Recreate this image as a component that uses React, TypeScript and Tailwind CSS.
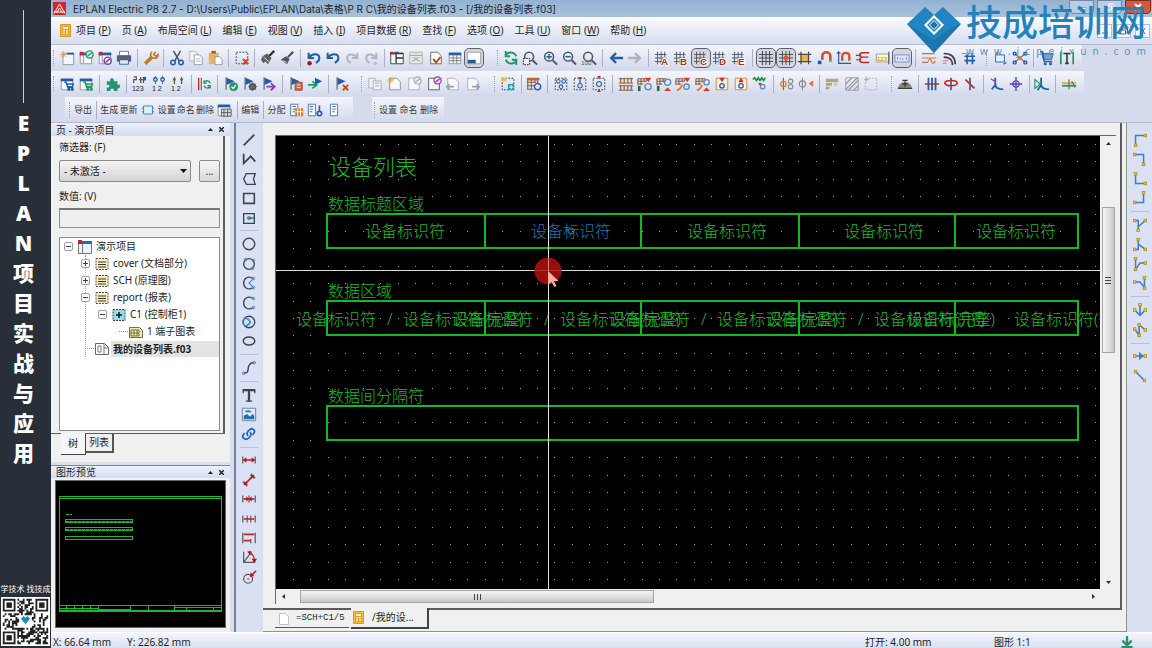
import { useState } from "react";
import type { ReactNode } from "react";

const line = (d: string, color = "#3f444c", width = 1.5) => (
  <path d={d} stroke={color} strokeWidth={width} fill="none" />
);
const shape = (d: string, color: string, stroke = "none") => <path d={d} fill={color} stroke={stroke} />;
const ring = (x: number, y: number, r: number, color = "#3f444c", width = 1.5, fill = "none") => (
  <circle cx={x} cy={y} r={r} stroke={color} strokeWidth={width} fill={fill} />
);

const BLUE = "#1f5fa8";
const RED = "#c8281e";
const GREEN = "#1e9a66";
const ORANGE = "#e07a2a";
const GREY = "#a9adb5";

const page = (color = "#8a8f98") => shape("M3 2.5h8l4 4v9H3z", "#f7f8fb", color);
const docGrid = (head: string) => (
  <>
    {shape("M2.5 3.5h13v12h-13z", "#f6f8fc", "#8a8f98")}
    {shape("M2 3h14v3H2z", head)}
  </>
);
const flag = (
  <>
    {line("M3.500 1.500v14", "#6b7280")}
    {shape("M4 2l9 4-9 4z", BLUE)}
  </>
);
const mesh = line("M1 5h13M1 9h13M1 13h13M4 2v14M8 2v14M12 2v14", "#4b4f57", 1);
const letterMesh = (letter: string) => (
  <>
    {mesh}
    <text x="8" y="17" fontSize="11" fontWeight="bold" fontFamily="Liberation Sans, sans-serif" fill="#a8320a" stroke="#fff" strokeWidth="2" paintOrder="stroke">
      {letter}
    </text>
  </>
);
const lens = (
  <>
    {ring(8, 7.5, 5, "#4b5563", 1.7)}
    {line("M12 11.500l5 5", "#4b5563", 2.2)}
  </>
);
const digits = (text: string) => (
  <text x="1" y="17" fontSize="8" fontFamily="Liberation Sans, sans-serif" fill="#222">
    {text}
  </text>
);
const dashedBox = (color = "#333") => (
  <rect x="2.500" y="2.500" width="13" height="13" fill="none" stroke={color} strokeDasharray="2 1.5" />
);
const orangeMesh = line("M1 3h10M1 6h10M1 9h6M1 3v7M4.500 3v7M8 3v4M11 3v3", "#8a5a3c", 1.2);
const dims = (y: number) => line(`M2 ${y - 4}v8M16 ${y - 4}v8`, "#555", 1.3);

const undo = (color: string) => line("M3 3v6h6M3.500 8.500c3-5 11-5 11.500 0 .2 3-2 5-4 6", color, 2.3);
const redo = (color: string) => line("M15 3v6H9M14.500 8.500C11 4 4 4 3.500 8.500c0 3 2 5 4 6", color, 2.3);

const knot = (x: number, y: number) => (
  <rect x={x - 1.5} y={y - 1.5} width="3" height="3" fill="#f2c230" stroke="#b8860b" strokeWidth=".8" />
);

const icons: Record<string, ReactNode> = {
  "new page": <>{shape("M4.500 4.500h12v12h-12z", "#f3f6fb", "#8a8f98")}{line("M9 4h8", BLUE, 2)}{line("M5 1v8M1 5h8M2 2l6 6M8 2L2 8", "#e9a33b", 1)}</>,
  "open project": <>{docGrid(BLUE)}{shape("M2 2h4v4H2z", RED)}{line("M6 6v9", "#8a8f98", 1)}{ring(13, 5, 4, GREEN, 1.6, "#dff3ea")}{line("M10.500 7l5-4", GREEN)}</>,
  "close project": <>{docGrid(BLUE)}{shape("M2 2h4v4H2z", RED)}{line("M6 6v9", "#8a8f98", 1)}{ring(12, 12, 4, "#7a3fa0", 1.6, "#f0e6f7")}{line("M9.500 14l5-4", "#7a3fa0")}</>,
  print: <>{shape("M4 1.500h10v5H4z", "#fff", "#6b7280")}{shape("M1 6h16v7H1z", "#566173")}{shape("M4 11h10v5H4z", "#dbeafe", BLUE)}</>,
  settings: <>{line("M2.500 15.500L10 8", "#c07a24", 4)}{line("M10 2c-3 3-1 7 2 7 3 1 5-1 5-4l-3 2-2-2 2-3", "#c07a24", 1.8)}</>,
  cut: <>{line("M5 1l7 12M13 1L6 13", "#4b5563", 1.7)}{ring(4.5, 14, 2.5, BLUE, 1.7)}{ring(13.5, 14, 2.5, BLUE, 1.7)}</>,
  copy: <>{shape("M2 1.500h6l3 3v8H2z", "#f5f6f8", GREY)}{shape("M7 5.500h6l3 3v8H7z", "#fff", "#8a93a2")}{line("M9 10h5M9 12.500h5", GREY, 1)}</>,
  paste: <>{shape("M2 3h11v13H2z", "#e6b45a")}{shape("M5 1h5v3H5z", "#8a6a30")}{shape("M9 7.500h5l3 3v6H9z", "#fff", "#8a93a2")}</>,
  "delete area": <>{dashedBox()}{line("M10 10l6 6M16 10l-6 6", "#d8431a", 2.2)}</>,
  "copy format": <>{line("M16 1l-6 6", "#333", 2.6)}{shape("M3 7l5-3 5 5-4 7-3-3-2 2-3-4z", "#59605c")}{line("M4 8l7 6", "#d9ded9", 1)}</>,
  "assign format": <>{line("M16 2l-6 6", "#444", 2.2)}{shape("M2 11l6-4 4 3-3 6z", "#4f5653")}{line("M4 12l5 2", "#ddd", 1)}</>,
  "undo list": <>{undo(BLUE)}<circle cx="4" cy="15" r="2.500" fill="#b11" /></>,
  undo: undo(BLUE),
  redo: redo("#b4b8bf"),
  "redo list": <>{redo("#b4b8bf")}<circle cx="14" cy="15" r="1.800" fill="#b4b8bf" /></>,
  workspace: <>{shape("M2 3.500h14v12H2z", "#fafafa", "#333")}{line("M2 4h14M8 4v11M8 9h8", "#333", 1.5)}{shape("M1 2h4v3H1z", RED)}{shape("M6 2h5v2H6z", BLUE)}</>,
  "page macro": <>{shape("M2 2.500h14v13H2z", "#eceae0", "#aaa")}{line("M2 6h14M5 9h8M5 13l4-3 4 3", GREY, 1.3)}</>,
  "check page": <>{page("#666")}{line("M6 10l3 4 5-6", "#c2410c", 2)}</>,
  "data table": <>{docGrid(BLUE)}{line("M3 9h12M3 12h12M7 6v9M11 6v9", "#777", 1)}</>,
  preview: <>{shape("M1.500 2.500h15v13h-15z", "#fff", "#999")}{shape("M2 11h9v4H2z", BLUE)}</>,
  refresh: <>{line("M15 7C12 1 5 2 3 6M3 1v6h5M3 11c3 6 10 5 12 1M15 17v-6h-5", GREEN, 2.1)}</>,
  "zoom window": <>{lens}<rect x="1.500" y="9.500" width="7" height="7" fill="#eee" stroke="#222" strokeDasharray="2 1" /></>,
  "zoom in": <>{lens}{line("M5 7.500h6M8 4.500v6", BLUE, 1.6)}</>,
  "zoom out": <>{lens}{line("M5 7.500h6", BLUE, 1.6)}</>,
  "zoom all": <>{lens}<text x="0" y="17" fontSize="7" fontFamily="Liberation Sans, sans-serif" fill="#176b45">100</text></>,
  back: line("M17 9H4M9 3.500L3.500 9 9 14.500", BLUE, 2.6),
  forward: line("M1 9h13M9 3.500l5.500 5.500L9 14.500", "#b0b3b8", 2.6),
  "grid A": letterMesh("A"),
  "grid B": letterMesh("B"),
  "grid C": letterMesh("C"),
  "grid D": letterMesh("D"),
  "grid E": letterMesh("E"),
  grid: line("M1 5h16M1 9h16M1 13h16M5 1v16M9 1v16M13 1v16", "#4b4f57", 1.2),
  "grid snap": <>{line("M1 5h16M1 9h16M1 13h16M5 1v16M9 1v16M13 1v16", "#4b4f57", 1.1)}{line("M9 6v6M6 9h6M7 7l4 4M11 7l-4 4", "#e0561c", 1.3)}</>,
  "align to grid": <>{shape("M4.500 5h8v8h-8z", "#e9b44a")}{line("M4.500 2v14M13 2v14M1 5h15M1 13h15", "#4a4a3c", 1.4)}</>,
  "object snap": <>{line("M6 11V7c0-6 9-6 9 0v6", "#d4521f", 3)}{shape("M1 12h4v4H1z", BLUE)}{line("M13.500 12.500h3", "#999", 2.5)}</>,
  "design mode": <>{line("M3 2v13h14M1 4l2-2 2 2", BLUE, 1.3)}{line("M7 12V7c0-5 8-5 8 0v5", "#d4521f", 2.6)}</>,
  "smart connect": <>{line("M16 3H9C4 3 4 8 9 8h6M16 14H9c-5 0-5-6 0-6", RED, 1.6)}{line("M1 6h6M1 11h6", "#44597a", 1.3)}</>,
  numbering: <>{shape("M1.500 4.500h14v9h-14z", "#fff6cc", "#999")}<text x="2" y="12" fontSize="7" fontFamily="Liberation Sans, sans-serif" fill="#c08a00">123</text>{line("M15.500 2v14", "#666")}</>,
  "coordinate input": <>{shape("M1 5.500h16v8H1z", "#dfe3fa", "#7a86d8")}{line("M4 8v3M7 9v2M10 9v2M14 8v3", "#7a86d8", 1)}</>,
  "signal path": <>{line("M1 4h14M1 14h7", "#8f7d78")}{line("M1 9h16M8 13c2-4 3-3 4 0s3 2 4-1", "#e2743a", 1.4)}</>,
  "signal arc": <>{line("M3 8c7 0 10 3 10 9M3 4c9 0 13 4 13 12", "#383c44", 1.8)}{line("M2 12h6M2 15h4", "#c76", 1.2)}</>,
  "signal net": <>{line("M2 4h14", "#b66", 1)}{line("M5 7h12M5 12h12M8 5v11M14 5v11", BLUE, 1.8)}</>,
  "place block": <>{shape("M4 5.500h10v8H4z", "#e6f2fb", BLUE)}{line("M7 3l-3 2M13 16l3-2", BLUE)}</>,
  "move nodes": <>{line("M3 4l12 10M15 4L3 14", "#55708f", 1.3)}{ring(3, 4, 1.7, BLUE)}{ring(15, 4, 1.7, BLUE)}{ring(3, 14, 1.7, BLUE)}{ring(15, 14, 1.7, BLUE)}{shape("M7 7h4v4H7z", ORANGE)}</>,
  cart: <>{shape("M3 4h13l-2 7H5z", "#6fa3d6", BLUE)}{line("M1 2h3l2 11h9", BLUE)}{ring(7, 15.5, 1, BLUE)}{ring(13, 15.5, 1, BLUE)}</>,
  "text frame": <>{line("M2 2v14M16 2v14", "#2a8a4a", 1.8)}{line("M5 4h8M9 4v11M7 15h4", "#2c3a30", 1.8)}</>,

  "parts list": <>{docGrid(BLUE)}{line("M6 7h2l2 6h6M8 9h8l-1 3H9", BLUE, 1.6)}{ring(11, 15, 1, BLUE)}{ring(15, 15, 1, BLUE)}</>,
  "parts cart": <>{docGrid(BLUE)}{line("M6 7h2l2 6h6M8 9h8l-1 3H9", GREEN, 1.8)}{ring(11, 15, 1, GREEN)}{ring(15, 15, 1, GREEN)}</>,
  "add-ons": shape("M2 6h4c-2-4 5-5 4 0h4v4c4-2 4 5 0 4v3h-4c1-4-5-4-4 0H2v-4c4 1 4-4 0-3z", "#2a9270"),
  "number all": <>{line("M3 1h3v3H3v4M9 4h4M11 1v7M14 1v7", "#555", 1.4)}{shape("M14 1h3v4h-3z", BLUE)}{digits("123")}</>,
  "number devices": <>{ring(5, 4, 2, BLUE)}{ring(13, 4, 2, BLUE)}{line("M5 6v3M13 6v3M5 0v2M13 0v2", BLUE, 1)}{digits("1  2")}</>,
  "number pins": <>{line("M5 1v8M13 1v8", "#555", 1.4)}{shape("M3 3h4L5 7zM11 3h4l-2 4z", "#5a6a20")}{digits("1  2")}</>,
  synchronize: <>{line("M3 2v14", RED, 1.5)}{line("M6 2v14", "#777", 1.5)}{line("M16 8c-2-4-6-3-7 0M9 5v3h3M9 11c2 4 6 3 7 0M16 14v-3h-3", GREEN, 1.5)}</>,
  "confirm mark": <>{flag}{ring(12, 12, 4.500, GREEN, 1, GREEN)}{line("M9.500 12l2 2 3-4", "#fff")}</>,
  "configure mark": <>{flag}{ring(12, 12, 3, "#555", 2.2)}{line("M12 7v10M7 12h10M8.500 8.500l7 7M15.500 8.500l-7 7", "#555", 1)}</>,
  "next mark": <>{flag}{line("M6 12h9M11 8l4.500 4-4.500 4", "#8e3fae", 2)}</>,
  "mark report": <>{flag}{shape("M8 7h8v9H8z", "#c96a50", "#a1442c")}{line("M10 10h4M10 13h4", "#fff", 1)}</>,
  "go to mark": <>{shape("M9 2l8 4-8 4z", BLUE)}{line("M1 10h9M6 6l5 4-5 4", GREEN, 1.8)}</>,
  "remove mark": <>{flag}{line("M10 10l6 6M16 10l-6 6", "#d8431a", 2.2)}</>,
  "copy page": <>{shape("M2 2.500h7v11H2z", "#eef0f4", GREY)}{shape("M7 5.500h9v10H7z", "#eef0f4", GREY)}{line("M9 8h5M9 11h5", GREY, 1)}</>,
  "new document": <>{page()}{line("M4 1v7M0 4.500h8M1.500 2l5 5M6.500 2l-5 5", "#e9a33b", 1)}</>,
  "link document": <>{page(GREY)}{ring(13, 5, 4, GREY, 1.4, "#eee")}{line("M10.500 7l5-4", GREY)}</>,
  "open document": <>{page("#555")}{ring(13, 5, 4, "#8e3fae", 1.4, "#f0e0f7")}{line("M10.500 7l5-4", "#8e3fae")}</>,
  "previous document": <>{page(GREY)}{line("M10 12H2M5 9l-3 3 3 3", "#9ca0a8", 1.8)}</>,
  "next document": <>{page(GREY)}{line("M8 12h8M13 9l3 3-3 3", "#9ca0a8", 1.8)}</>,
  "insert device": <>{dashedBox()}{shape("M1 2h6v4H1z", "#f0c040")}{shape("M9 9h7v7H9z", "#1fa0a8")}{line("M12.500 10v5M10 12.500h5", "#fff", 1)}</>,
  "terminal strip": <>{line("M1 3h14M1 7h10M1 11h8M1 15h7M2 3v12M6 3v12M10 3v5", "#8a5a3c", 1.2)}{shape("M1 2h14v3H1z", "#c0673a")}{ring(13, 12, 3.500, BLUE)}{line("M13 5v4", RED)}</>,
  "insert symbols": <>{dashedBox()}{ring(6, 6, 2, BLUE, 1.2)}{ring(12, 6, 2, BLUE, 1.2)}{ring(9, 12, 2, BLUE, 1.2)}</>,
  "insert symbol": <>{dashedBox()}{ring(9, 11, 2.500, BLUE, 1.2)}{line("M9 4v4", BLUE)}{shape("M7 1h4L9 5z", RED)}</>,
  "insert pin": <>{dashedBox()}{ring(9, 9, 2.800, BLUE, 1.2)}{shape("M7 0h4l-2 4zM7 18h4l-2-4z", RED)}</>,
  "plug strip": <>{line("M1 3h16M1 8h16M1 11h16M1 16h16", "#555", 1)}{line("M3 2v6M7 2v6M11 2v6M15 2v6M3 10v6M7 10v6M11 10v6M15 10v6", "#c0682c", 1.6)}</>,
  "plug in": <>{orangeMesh}{shape("M1 11h3v6H1z", "#2d6b45")}{shape("M9 2h7l-3 5z", "#d2431c")}{ring(12.5, 12, 3.500, "#5b8cc4")}</>,
  "plug out": <>{orangeMesh}{shape("M1 11h3v6H1z", "#2d6b45")}{shape("M9 17h8l-4-4z", "#d2431c")}{ring(13, 7, 3.500, "#5b8cc4")}</>,
  "plug swap": <>{orangeMesh}{line("M2 16c4-1 5-3 6-6", ORANGE, 2)}{shape("M10 2h7l-3 5z", "#d2431c")}{ring(13, 12, 3, "#5b8cc4")}</>,
  "plug turn": <>{orangeMesh}{line("M2 16c4-1 5-3 6-6", ORANGE, 2)}{shape("M9 17h8l-4-4z", "#d2431c")}{ring(13, 7, 3, "#5b8cc4")}</>,
  "box top": <>{shape("M2.500 2.500h13v13h-13z", "#fff3e8", ORANGE)}{ring(9, 11, 2.500, BLUE)}{shape("M6 2h6L9 7z", RED)}</>,
  "box middle": <>{shape("M2.500 2.500h13v13h-13z", "#fff3e8", ORANGE)}{ring(9, 11, 2.500, BLUE)}{shape("M6 7h6L9 2z", RED)}</>,
  "wire list": <>{line("M1 4l2-2 2 3 2-3 2 3 2-3 2 3 2-3", "#1b9040", 1.800)}{ring(12, 12, 2.500, "#5b8cc4")}{shape("M7 8h4l-2 3z", RED)}</>,
  "contact row": <>{line("M5 2v14", "#666", 1.2)}{ring(5, 9, 3, ORANGE)}{ring(13, 6, 2.500, "#888", 1.2)}{ring(13, 12, 2.500, "#888", 1.2)}</>,
  "contact end": <>{line("M5 2v14", "#888", 1.2)}{ring(5, 9, 3.500, "#888", 1.3)}{shape("M17 5v7l-5-3.500z", ORANGE)}</>,
  "align blocks": <>{shape("M2 3h14v4H2zM2 8h7v3H2zM2 12h4v3H2z", "#a9aa80")}{shape("M11 8h4v3h-4z", "#c8c8b4")}</>,
  hatch: <>{line("M2 9l7-7M2 15L15 2M5 16L16 5M11 16l5-5", "#93969c", 1.300)}{shape("M2 2h14v14H2z", "none", "#999")}</>,
  "empty frame": <>{dashedBox(GREY)}{line("M4 1v6M1 4h6", GREY, 1)}</>,
  "mounting rail": <>{shape("M1 14c1-5 4-7 8-7s7 2 8 7z", "#8a8878")}{line("M1 14h16M9 6v6M6 9h6M6 5h6", "#3f3f3a", 1.5)}</>,
  bus: <>{line("M5 2v14M9 2v14M13 2v14", BLUE, 2)}{line("M1 9h16", RED, 1.6)}</>,
  "bus shield": <>{line("M9 2v14", BLUE, 1.800)}<ellipse cx="9" cy="8" rx="7" ry="3" fill="none" stroke={RED} strokeWidth="1.800" /></>,
  "bus break": <>{line("M9 2v14", BLUE, 1.800)}{line("M4 4l10 10", RED, 2)}</>,
  "node left": <>{line("M7 2v7c0 4 4 6 9 6M3 15l5-6", BLUE, 2)}{line("M2 3l6 4", "#8e3fae", 1.300)}</>,
  "node center": <>{line("M9 1v16M2 9h14", BLUE, 1.500)}{ring(9, 9, 3.500, "#8e3fae", 1.500)}</>,
  "node right": <>{line("M8 2v7c0 4 4 6 9 6M8 10l-4 6", BLUE, 2)}{line("M1 4l6 5-6 5z", GREEN, 1.300)}</>,
  "wire merge": <>{line("M1 8h16", "#e0b020", 2)}{line("M1 11h16", GREEN, 2)}{line("M9 4v11M12 6l4 7", "#6b6b40", 1.300)}</>,

  frame: <>{shape("M4 4.500h10v9H4z", "#dff0fa", "#2b7cc0")}{line("M2 7h2M2 11h2M14 7h2M14 11h2", "#2b7cc0", 1)}</>,
  "report table": <>{docGrid(BLUE)}{shape("M6 8h11v8H6z", "#ddd", "#555")}{line("M9 8v8M13 8v8M6 12h11", "#555", 1)}</>,
  "report orange": <>{shape("M3 2.500h8v13H3z", "#fff", "#4470a0")}{line("M5 5h4M5 8h4M5 11h3", BLUE, 1)}{shape("M8 7h9v9H8z", ORANGE)}{line("M11 7v9M14 7v9M8 11h9", "#fff", 1)}</>,
  "report node": <>{shape("M1.500 2.500h8v13h-8z", "#fff", "#4470a0")}{line("M3 5h4M3 8h4M3 11h3", BLUE, 1)}{line("M14 4v6", BLUE, 1.800)}{ring(14, 13, 2.500, "#2256c8", 1.800)}</>,
  report: <>{shape("M5 2.500h8v13H5z", "#fff", "#4470a0")}{line("M7 5h4M7 8h4M7 11h3", BLUE, 1)}</>,

  line: line("M3 15L15 3", "#3f444c", 2),
  polyline: line("M3 3v11l8-8 5 6", "#3f444c", 2),
  polygon: line("M6 3h10l-2 6 2 6H6L3 9z"),
  rectangle: line("M3 4h12v11H3z", "#3f444c", 1.8),
  "rectangle by centre": <>{line("M3 4h12v11H3z")}{line("M9 9h6", BLUE)}{ring(9, 9, 1.5, BLUE, 1.2)}</>,
  circle: ring(9, 9, 6.5),
  "circle by points": <>{ring(9, 9, 6)}{ring(5, 4, 1.5, "#3b8ad8", 1)}{ring(14, 5, 1.5, "#3b8ad8", 1)}{ring(13, 14, 1.5, "#3b8ad8", 1)}</>,
  "arc by centre": <>{line("M14 4C8 0 3 4 3 9s5 9 11 5")}{line("M14 4L9 9l5 5", "#3b8ad8", 1.2)}{ring(14, 4, 1.5, "#3b8ad8", 1)}{ring(14, 14, 1.5, "#3b8ad8", 1)}</>,
  "arc by points": <>{line("M14 4C8 0 3 4 3 9s5 9 11 5")}{ring(14, 4, 1.5, "#3b8ad8", 1)}{ring(14, 14, 1.5, "#3b8ad8", 1)}</>,
  sector: <>{ring(9, 9, 6.5)}{ring(6, 9, 4, "#3b8ad8", 1.2)}{line("M6 5l5 4-5 4", "#3b8ad8", 1.2)}</>,
  ellipse: <ellipse cx="9" cy="9" rx="6.500" ry="4.500" fill="none" stroke="#3f444c" strokeWidth="1.600" />,
  spline: <>{line("M3 15c7 0 4-6 6-9s3-3 6-3", "#3f444c", 1.6)}{ring(3, 15, 1.5, "#3b8ad8", 1)}{ring(15, 3, 1.5, "#3b8ad8", 1)}</>,
  text: <>{line("M2 3.500h14M9 4v12", "#3f444c", 2.6)}{line("M2.500 3v4M15.500 3v4M5.500 16h7", "#3f444c", 1.400)}</>,
  image: <>{shape("M1.500 2.500h15v14h-15z", "#dcebf7", "#6b7a8c")}{shape("M3 15v-4l4-2 3 3 3-3 2 2v4zM5 5h5l2 2H5z", "#1f6db5")}</>,
  hyperlink: <>{line("M8 11c-3-3 0-5 2-7s6 0 5 3l-2 3", "#1f6db5", 2)}{line("M10 7c3 3 0 5-2 7s-7 0-6-3l2-3", "#1f6db5", 2)}</>,
  "linear dimension": <>{dims(9)}{line("M3 9h12", RED, 1.8)}{shape("M2 9l4-3v6zM16 9l-4-3v6z", "#b3181c")}</>,
  "aligned dimension": <>{line("M2 11l5 5M11 2l5 5", "#555", 1.3)}{line("M4 14L14 4", RED, 2)}{shape("M3 15l1-5 4 4zM15 3l-1 5-4-4z", "#b3181c")}</>,
  "continued dimension": <>{dims(9)}{line("M9 5v8", "#555", 1.3)}{line("M3 9h12", RED, 2)}{shape("M9 9L6 6v6zM9 9l3-3v6z", "#b3181c")}</>,
  "chain dimension": <>{dims(9)}{line("M7 5v8M11 5v8", "#555", 1.2)}{line("M3 9h12", RED, 1.8)}</>,
  "baseline dimension": <>{line("M2 3v12M16 3v12M11 10v5", "#555", 1.3)}{line("M3 5h12M3 12h8", RED, 2)}</>,
  "angular dimension": <>{line("M3 3v12h13M3 15L12 3", "#555", 1.3)}{line("M9 4c4 1 6 5 6 9", RED, 1.5)}{shape("M7 3l4-1v5zM12 11h6l-3 5z", "#b3181c")}</>,
  "radius dimension": <>{ring(8, 11, 5, "#555", 1.3)}<circle cx="8" cy="11" r="1" fill={RED} />{line("M11 8l6-6", RED, 1.8)}{shape("M10 9l1-5 4 4z", "#b3181c")}</>,

  "corner down right": <>{line("M4 15V4h11", "#3b7fc4", 1.7)}{knot(4, 15)}{knot(15, 4)}</>,
  "corner down left": <>{line("M3 4h10v11", "#3b7fc4", 1.7)}{knot(3, 4)}{knot(13, 15)}</>,
  "corner up right": <>{line("M4 3v11h11", "#3b7fc4", 1.7)}{knot(4, 3)}{knot(15, 14)}</>,
  "corner up left": <>{line("M3 14h10V3", "#3b7fc4", 1.7)}{knot(3, 14)}{knot(13, 3)}</>,
  "t-node down": <>{line("M3 4h4v11M15 4L7 11", "#3b7fc4", 1.7)}{knot(3, 4)}{knot(15, 4)}{knot(7, 15)}</>,
  "t-node up": <>{line("M3 14h4V3M7 8l8 6", "#3b7fc4", 1.7)}{knot(3, 14)}{knot(15, 14)}{knot(7, 3)}</>,
  "t-node right": <>{line("M4 3v12l5-7h6", "#3b7fc4", 1.7)}{knot(4, 3)}{knot(4, 15)}{knot(15, 8)}</>,
  "t-node left": <>{line("M3 8h6l5 6V3", "#3b7fc4", 1.7)}{knot(3, 8)}{knot(14, 3)}{knot(14, 15)}</>,
  jumper: <>{line("M9 3v12M3 9l6 6 6-6", "#3b7fc4", 1.8)}{knot(9, 3)}{knot(3, 9)}{knot(15, 9)}</>,
  crossing: <>{line("M3 8l5 7V3l7 6", "#3b7fc4", 1.8)}{knot(3, 8)}{knot(15, 9)}{knot(8, 15)}{knot(8, 3)}</>,
  interruption: <>{line("M3 9h12", "#3b7fc4", 1.7)}{shape("M8 4l5 5-5 5z", "#3b7fc4")}{knot(3, 9)}{knot(15, 9)}</>,
  diagonal: <>{line("M4 4l10 10", "#3b7fc4", 1.8)}{knot(4, 4)}{knot(14, 14)}</>,
};

const pressed = new Set(["preview", "grid C", "grid", "grid snap", "coordinate input"]);

function Icon({ name }: { name: string }) {
  return (
    <svg className="h-4 w-4 shrink-0" viewBox="0 0 18 18" fill="none" aria-hidden="true">
      {icons[name]}
    </svg>
  );
}

function ToolButton({ name }: { name: string }) {
  // Entries prefixed with "#" show their caption instead of a glyph
  if (name.startsWith("#")) {
    return (
      <button type="button" className="w-[18px] shrink-0 whitespace-nowrap text-[9px] leading-4 text-[#33363c]">
        {name.slice(1)}
      </button>
    );
  }
  const base = "flex h-[18px] w-[18px] shrink-0 items-center justify-center rounded-sm";
  return (
    <button
      type="button"
      aria-label={name}
      className={pressed.has(name) ? `${base} bg-[#d3d6df] outline outline-[#5b5f68]` : `${base} hover:bg-white/60`}
    >
      <Icon name={name} />
    </button>
  );
}

function Toolbar({ items, width, label }: { items: string; width: string; label: string }) {
  return (
    <div role="toolbar" aria-label={label} className={`flex h-[25px] items-center bg-linear-to-b from-[#f4f6fc] to-[#d3d9ec] ${width}`}>
      <span className="mr-1 h-4 w-px shrink-0 border-l border-dotted border-[#9aa3ba]" />
      <div className="flex flex-1 items-center justify-between">
        {items.split(",").map((name, i) =>
          name === "|" ? (
            <span key={i} className="flex w-1.5 shrink-0 justify-center">
              <span className="h-[18px] w-px bg-[#aab1c4]" />
            </span>
          ) : (
            <ToolButton key={i} name={name} />
          ),
        )}
      </div>
    </div>
  );
}

function SideToolbar({ items, height, label }: { items: string; height: string; label: string }) {
  return (
    <div role="toolbar" aria-label={label} aria-orientation="vertical" className={`flex w-full flex-col items-center justify-between bg-[#dbe1f4] ${height}`}>
      {items.split(",").map((name, i) =>
        name === "|" ? (
          <span key={i} className="flex h-1.5 w-[18px] items-center">
            <span className="h-px w-full bg-[#b9c1d8]" />
          </span>
        ) : (
          <ToolButton key={i} name={name} />
        ),
      )}
    </div>
  );
}

const menus = ["项目 (P)", "页 (A)", "布局空间 (L)", "编辑 (E)", "视图 (V)", "插入 (I)", "项目数据 (R)", "查找 (F)", "选项 (O)", "工具 (U)", "窗口 (W)", "帮助 (H)"];

function MenuLabel({ text }: { text: string }) {
  const [name, key] = text.split(/[()]/);
  return (
    <>
      {name}(<span className="underline">{key}</span>)
    </>
  );
}

function FormIcon({ className }: { className: string }) {
  return (
    <svg className={className} viewBox="0 0 11 13" aria-hidden="true">
      <path d="M.5.500h10v12H.5z" fill="#f5b93a" stroke="#d99a22" />
      <path d="M2.500 2.500h6v8h-6zM2.500 5.500h6M2.500 8h6M5.500 5.500v5" fill="#fff2c8" stroke="#e0a02a" />
    </svg>
  );
}

function WindowControls() {
  const base = "flex h-[14px] items-center justify-center rounded-b-sm border";
  return (
    <div className="flex h-full items-start gap-[3px] pr-px">
      <button type="button" aria-label="最小化" className={`${base} w-[25px] border-[#6f87a5] bg-[#b9cde4]`}>
        <svg className="h-2 w-2.5" viewBox="0 0 10 8" aria-hidden="true"><path d="M1 4.500h8v2H1z" fill="#fff" stroke="#5b6b80" strokeWidth=".5" /></svg>
      </button>
      <button type="button" aria-label="还原" className={`${base} w-[25px] border-[#6f87a5] bg-[#b9cde4]`}>
        <svg className="h-2 w-2.5" viewBox="0 0 10 8" aria-hidden="true"><path d="M3.500 3V1h5v4H7M1.500 3h5v4h-5z" fill="none" stroke="#fff" /></svg>
      </button>
      <button type="button" aria-label="关闭" className={`${base} w-[26px] border-[#7d2f22] bg-[#d05a42]`}>
        <svg className="h-2 w-2.5" viewBox="0 0 10 8" aria-hidden="true"><path d="M2 1l6 6M8 1L2 7" stroke="#fff" strokeWidth="2" /></svg>
      </button>
    </div>
  );
}

function DocumentControls() {
  const base = "flex h-[14px] w-[15px] items-center justify-center border border-[#b4bccb] bg-white/60";
  return (
    <div className="ml-auto flex gap-1 pr-0.5">
      <button type="button" aria-label="最小化文档" className={base}>
        <svg className="h-2 w-2" viewBox="0 0 8 8" aria-hidden="true"><path d="M1 6h6" stroke="#667" /></svg>
      </button>
      <button type="button" aria-label="还原文档" className={base}>
        <svg className="h-2 w-2" viewBox="0 0 8 8" aria-hidden="true"><path d="M2.500 3V1h5v4H6M.5 3h5v4h-5z" fill="none" stroke="#667" /></svg>
      </button>
      <button type="button" aria-label="关闭文档" className={base}>
        <svg className="h-2 w-2" viewBox="0 0 8 8" aria-hidden="true"><path d="M2 1l4 6M6 1L2 7" stroke="#667" /></svg>
      </button>
    </div>
  );
}

function Watermark() {
  return (
    <div className="pointer-events-none absolute right-[6px] top-0 flex gap-1 text-[#2482bb]">
      <svg className="mt-[6px] h-[48px] w-[56px]" viewBox="0 0 56 48" aria-hidden="true">
        <path d="M1 18L19 1l9 8 9-8 18 17-27 29z" fill="#2185c2" />
        <path d="M1 18L28 47l27-29-10 4-17 12z" fill="#17699f" opacity=".5" />
        <path d="M28 9l10 10-10 10-10-10z" fill="#fff" />
        <path d="M28 12l7 7-7 7-7-7z" fill="#2185c2" />
        <path d="M28 14.500l4.500 4.500-4.500 4.500-4.500-4.500z" fill="#1b75ad" stroke="#fff" />
      </svg>
      <div className="flex flex-col">
        <span className="whitespace-nowrap text-[36px] font-medium leading-[45px]">技成培训网</span>
        <span className="flex justify-between text-[10px] leading-3 text-[#5f93bb]">
          {"www.jcpeixun.com".split("").map((char, i) => (
            <span key={i}>{char}</span>
          ))}
        </span>
      </div>
    </div>
  );
}

const QR_SIZE = 25;

function qrCells() {
  let seed = 91;
  let d = "";
  const inFinder = (x: number, y: number) => (x < 8 && y < 8) || (x > 16 && y < 8) || (x < 8 && y > 16);
  for (let y = 0; y < QR_SIZE; y++) {
    for (let x = 0; x < QR_SIZE; x++) {
      seed = (seed * 1103515245 + 12345) % 2147483648;
      const inLogo = x > 8 && x < 16 && y > 8 && y < 16;
      if (!inFinder(x, y) && !inLogo && seed > 1073741824) d += `M${x} ${y}h1v1h-1z`;
    }
  }
  return d;
}

function QrCode() {
  return (
    <svg className="w-full bg-white" viewBox="-1 -1 27 27" role="img" aria-label="二维码">
      <path d={qrCells()} fill="#222" />
      {[[0, 0], [18, 0], [0, 18]].map(([x, y]) => (
        <g key={`${x}-${y}`} fill="#222">
          <path d={`M${x + 0.5} ${y + 0.5}h6v6h-6z`} fill="none" stroke="#222" />
          <path d={`M${x + 2} ${y + 2}h3v3h-3z`} />
        </g>
      ))}
      <path d="M10 11l1.500-1.500 1 1 1-1L15 11l-2.500 3z" fill="#2185c2" />
    </svg>
  );
}

function CourseBanner() {
  return (
    <aside className="flex w-[51px] shrink-0 flex-col items-center bg-[#282f38] text-white">
      <span className="mt-[10px] h-[93px] w-px shrink-0 bg-[#f0e020] mr-1" />
      <h1 className="mr-1 mt-[5px] flex flex-col items-center text-[21px] font-black leading-[30px]">
        {"EPLAN项目实战与应用".split("").map((char, i) => (
          <span key={i}>{char}</span>
        ))}
      </h1>
      <p className="mt-auto whitespace-nowrap text-[8px] leading-4">学技术 找技成</p>
      <div className="mb-0.5 w-full px-px">
        <QrCode />
      </div>
    </aside>
  );
}

function PanelHeader({ title }: { title: string }) {
  return (
    <header className="flex h-[13px] items-center bg-linear-to-b from-[#eef1fa] to-[#d5dcf0] pl-[5px] pr-1.5 text-[10px] leading-3">
      <h2 className="flex-1">{title}</h2>
      <button type="button" aria-label="停靠" className="mr-1.5">
        <svg className="h-[3px] w-[5px]" viewBox="0 0 5 3" aria-hidden="true"><path d="M0 3l2.500-3L5 3z" fill="#222" /></svg>
      </button>
      <button type="button" aria-label="关闭">
        <svg className="h-[5px] w-[5px]" viewBox="0 0 5 5" aria-hidden="true"><path d="M0 0l5 5M5 0L0 5" stroke="#222" strokeWidth="1.400" /></svg>
      </button>
    </header>
  );
}

type TreeItem = { label: string; icon: "project" | "doc" | "cabinet" | "terminal" | "form"; open?: boolean; selected?: boolean; children?: TreeItem[] };

const tree: TreeItem = {
  label: "演示项目",
  icon: "project",
  open: true,
  children: [
    { label: "cover (文档部分)", icon: "doc", open: false },
    { label: "SCH (原理图)", icon: "doc", open: false },
    {
      label: "report (报表)",
      icon: "doc",
      open: true,
      children: [{ label: "C1 (控制柜1)", icon: "cabinet", open: true, children: [{ label: "1 端子图表", icon: "terminal" }] }],
    },
    { label: "我的设备列表.f03", icon: "form", selected: true },
  ],
};

const treeIcons = {
  project: <><path d="M.5 1.500h13v12H.5z" fill="#eef4fa" stroke="#777" /><path d="M0 1h14v3H0z" fill="#1f6db5" /><path d="M0 0h4v4H0z" fill="#c22" /><path d="M4.500 4v9" stroke="#777" /></>,
  doc: <><path d="M1 1.500h12v11H1z" fill="#fdeec0" stroke="#555" strokeDasharray="2 1" /><path d="M3 5h8M3 7.500h8M3 10h8" stroke="#333" /></>,
  cabinet: <><path d="M1 1.500h12v11H1z" fill="#8fe0e6" stroke="#444" strokeDasharray="2 1" /><path d="M7 4v6M4 7h6" stroke="#111" strokeWidth="1.500" /></>,
  terminal: <><path d="M.5 2.500h10l3 3v7H.5z" fill="#f3ecb4" stroke="#77703a" /><path d="M2 5h8v6H2zM2 8h8M5 5v6M8 5v6" fill="none" stroke="#77703a" /></>,
  form: <><path d="M.5 1.500h9l4 4v7H.5z" fill="#fff" stroke="#666" /><path d="M3 4v6M3 4h3v6H3M9 2v4h4M9 6v6" fill="none" stroke="#777" /></>,
};

function TreeNode({ item, root }: { item: TreeItem; root?: boolean }) {
  return (
    <li>
      <div className="flex h-[17px] items-center">
        {item.open === undefined ? (
          <span className="ml-1 w-[9px] border-t border-dotted border-[#999]" />
        ) : (
          <button type="button" aria-label={item.label} aria-expanded={item.open} className="flex h-[9px] w-[9px] shrink-0 items-center justify-center rounded-xs border border-[#9a9fa8] bg-white">
            <svg className="h-[5px] w-[5px]" viewBox="0 0 5 5" aria-hidden="true">
              <path d={item.open ? "M0 2.500h5" : "M0 2.500h5M2.500 0v5"} stroke="#345" />
            </svg>
          </button>
        )}
        <svg className={item.open === undefined ? "ml-px h-[14px] w-[14px] shrink-0" : "ml-[5px] h-[14px] w-[14px] shrink-0"} viewBox="0 0 14 14" fill="none" aria-hidden="true">
          {treeIcons[item.icon]}
        </svg>
        <span className={item.selected ? "ml-0.5 flex-1 whitespace-nowrap bg-[#e3e3e3] pl-0.5 font-bold leading-4" : "pl-1 whitespace-nowrap"}>{item.label}</span>
      </div>
      {item.children && (
        <ul className={root ? "ml-[21px] border-l border-dotted border-[#aaa] [&>li]:-ml-[5px]" : "ml-[17px]"}>
          {item.children.map((child) => (
            <TreeNode key={child.label} item={child} />
          ))}
        </ul>
      )}
    </li>
  );
}

function PagesPanel() {
  const [value, setValue] = useState("");
  return (
    <section className="flex flex-1 flex-col bg-[#f0f0f0] text-[10px]">
      <PanelHeader title="页 - 演示项目" />
      <div className="mr-[5px] flex flex-1 flex-col border-b border-r-2 border-[#5a5d63] pb-0.5 pl-2 pr-[3px]">
        <label htmlFor="filter" className="mt-0.5 leading-[18px]">筛选器: (F)</label>
        <div className="mt-1 flex h-[22px] justify-between gap-2">
          <div className="relative flex min-w-0 flex-1">
            <select id="filter" className="w-full appearance-none rounded-xs border border-[#8a8a8a] bg-linear-to-b from-[#f4f4f4] to-[#d4d4d4] pl-1 text-[10px]">
              <option>- 未激活 -</option>
            </select>
            <svg className="pointer-events-none absolute right-1 top-[9px] h-1 w-[7px]" viewBox="0 0 7 4" aria-hidden="true">
              <path d="M0 0h7L3.500 4z" fill="#111" />
            </svg>
          </div>
          <button type="button" aria-label="筛选器设置" className="w-[21px] rounded-xs border border-[#8a8a8a] bg-linear-to-b from-[#f6f6f6] to-[#d8d8d8]">...</button>
        </div>
        <label htmlFor="value" className="mt-1 leading-[20px]">数值: (V)</label>
        <input id="value" value={value} onChange={(e) => setValue(e.target.value)} className="mt-0.5 h-[20px] border border-t-2 border-[#8d8d8d] border-t-[#777] bg-[#efefef] px-1" />
        <ul className="mt-[9px] flex-1 border border-[#8a8d92] bg-white pl-1">
          <TreeNode item={tree} root />
        </ul>
      </div>
      <div role="tablist" className="flex h-[28px] pl-2.5">
        <button type="button" role="tab" aria-selected="true" className="-mt-px h-[22px] w-[25px] border-b border-r border-[#444] bg-[#f6f6f6]">树</button>
        <button type="button" role="tab" aria-selected="false" className="h-[19px] w-7 border-b-2 border-r-2 border-[#555]">列表</button>
      </div>
    </section>
  );
}

function PreviewPanel() {
  return (
    <section className="mt-[3px] flex h-[167px] shrink-0 flex-col border-t border-[#7a86a5] bg-[#f0f0f0]">
      <PanelHeader title="图形预览" />
      <div className="mb-1 ml-1 mr-1 mt-0.5 flex-1 border border-[#666] bg-black">
        <svg className="h-full w-full" viewBox="0 0 168 145" preserveAspectRatio="none" fill="none" stroke="#1db82d" shapeRendering="crispEdges" aria-hidden="true">
          <path d="M3.500 15.500h161v114h-161zM3.500 17.500h161" />
          <path d="M9.500 38.500h67v3h-67zM9.500 46.500h67v3h-67zM9.500 55.500h67v3h-67z" />
          <path d="M10 33.500h6M10 40h66M10 48h66" strokeDasharray="3 1" />
          <path d="M3.500 123.500h161M3.500 126.500h38M3.500 128.500h161M42 127.500h32M74 123v6M92 123v6M118 123v6M118 125.500h46M130 126v3M157 125v4M10 123v6M18 123v6M26 123v6M34 123v6M42 123v6" />
        </svg>
      </div>
    </section>
  );
}

function dotGrid() {
  let d = "";
  for (let row = 0; row < 50; row++) {
    for (let col = 0; col < 100; col++) {
      d += `M${Math.round(17 + col * 17.43)} ${Math.round(8 + row * 17.4)}h1v1h-1z`;
    }
  }
  return d;
}

const fieldStarts = [20, 177, 334, 491, 631];
const headerStarts = [89, 255, 411, 568, 700];

function FormEditor() {
  return (
    <svg className="min-h-0 min-w-0 flex-1 bg-black" role="img" aria-label="设备列表" fill="#22b82e" fontSize="16" fontWeight="300">
      <path d={dotGrid()} fill="#9a9e9a" />
      <text x="53" y="39" fontSize="22">设备列表</text>
      <text x="52" y="74">数据标题区域</text>
      <text x="52" y="161">数据区域</text>
      <text x="52" y="266">数据间分隔符</text>
      {headerStarts.map((x, i) => (
        <text key={x} x={x} y="101" fill={i === 1 ? "#1f78ac" : "#22b82e"}>设备标识符</text>
      ))}
      {fieldStarts.map((x, i) => (
        <text key={x} y="189">
          <tspan x={x}>设备标识符</tspan>
          {i < 4 && <tspan x={x + 91}>/</tspan>}
          <tspan x={x + 107}>设备标识符(完整)</tspan>
        </text>
      ))}
      <circle cx="295" cy="95" r="3" fill="none" stroke="#1b75b5" />
      <g fill="none" stroke="#14b824" strokeWidth="2">
        <path d="M51 78h751v34H51zM209 78v34M365 78v34M523 78v34M679 78v34" />
        <path d="M51 165h751v34H51zM209 165v34M365 165v34M523 165v34M679 165v34" />
        <path d="M51 270h751v34H51z" />
      </g>
      <line x1="0" x2="100%" y1="134.500" y2="134.500" stroke="#d8d8d8" />
      <line x1="272.500" x2="272.500" y1="0" y2="100%" stroke="#e4e4e4" />
      <circle cx="272" cy="135" r="13.500" fill="#b3100c" fillOpacity=".85" />
      <path d="M272 135v14l3.500-3 3 5 2-1-3-5h5z" fill="#ffb0a8" />
      <path d="M272.500 122v13" stroke="#e08080" />
    </svg>
  );
}

function ScrollArrow({ d, label, className }: { d: string; label: string; className: string }) {
  return (
    <button type="button" aria-label={label} className={`flex items-center justify-center ${className}`}>
      <svg className="h-[5px] w-[5px]" viewBox="0 0 5 5" aria-hidden="true">
        <path d={d} fill="#333" />
      </svg>
    </button>
  );
}

function Scrollbar({ vertical }: { vertical?: boolean }) {
  if (vertical) {
    return (
      <div className="flex w-4 shrink-0 flex-col items-center bg-[#f0f0f0]">
        <ScrollArrow label="向上滚动" d="M0 4l2.500-3L5 4z" className="h-[14px] w-full" />
        <span className="mt-[57px] flex h-[146px] w-[13px] flex-col items-center justify-center gap-0.5 border border-[#a5a5a5] bg-linear-to-r from-[#f5f5f5] to-[#c9c9c9]">
          <span className="h-px w-1.5 bg-[#444]" />
          <span className="h-px w-1.5 bg-[#444]" />
          <span className="h-px w-1.5 bg-[#444]" />
        </span>
        <ScrollArrow label="向下滚动" d="M0 1l2.500 3L5 1z" className="mt-auto h-[14px] w-full" />
      </div>
    );
  }
  return (
    <div className="flex h-[15px] shrink-0 items-center bg-[#f0f0f0] pr-4">
      <ScrollArrow label="向左滚动" d="M4 0L1 2.500 4 5z" className="h-full w-[14px]" />
      <span className="ml-2.5 flex h-[13px] w-[43%] items-center justify-center gap-0.5 border border-[#a5a5a5] bg-linear-to-b from-[#f5f5f5] to-[#c9c9c9]">
        <span className="h-1.5 w-px bg-[#444]" />
        <span className="h-1.5 w-px bg-[#444]" />
        <span className="h-1.5 w-px bg-[#444]" />
      </span>
      <ScrollArrow label="向右滚动" d="M1 0l3 2.500L1 5z" className="ml-auto h-full w-[14px]" />
    </div>
  );
}

function Workspace() {
  return (
    <main className="flex min-w-0 flex-1 flex-col border-b border-r border-[#8d9586] bg-[#f0f0f0]">
      <div className="flex min-h-0 flex-1 flex-col border-b-2 border-r-2 border-[#5b5b5b] pb-1 pl-3 pr-1 pt-3 mr-1">
        <div className="flex min-h-0 flex-1 flex-col border-l border-t border-[#666]">
          <div className="flex min-h-0 flex-1">
            <FormEditor />
            <Scrollbar vertical />
          </div>
          <Scrollbar />
        </div>
      </div>
      <div role="tablist" className="flex h-[21px] shrink-0 items-start gap-0.5 pl-3 text-[10px]">
        <button type="button" role="tab" aria-selected="false" className="flex h-[18px] w-[74px] items-center border-b border-[#555] pl-[3px] font-['Liberation_Mono','Noto_Sans_CJK_SC',monospace] text-[9px]">
          <svg className="mr-1.5 h-3 w-3 shrink-0" viewBox="0 0 12 12" aria-hidden="true">
            <path d="M1.500.5h6l3 3v8h-9z" fill="#fff" stroke="#bcc3d0" />
          </svg>
          =SCH+C1/5
        </button>
        <button type="button" role="tab" aria-selected="true" className="-mt-0.5 flex h-[21px] w-[78px] items-center border-b-2 border-r-2 border-[#444] bg-[#f0f0f0] pl-0.5">
          <FormIcon className="mr-2 h-[13px] w-[11px]" />
          /我的设...
        </button>
      </div>
    </main>
  );
}

export default function App() {
  return (
    <div className="relative flex h-screen overflow-hidden bg-[#d8dff0] font-['Noto_Sans','Noto_Sans_CJK_SC',sans-serif] text-[#1d1f24]">
      <CourseBanner />
      <div className="flex min-w-0 flex-1 flex-col">
        <header className="flex h-[17px] shrink-0 items-center bg-linear-to-b from-[#93b1d1] to-[#a9c2dc] pl-0.5">
          <svg className="mr-[7px] h-[13px] w-[13px]" viewBox="0 0 13 13" aria-hidden="true">
            <path d="M0 0h13v13H0z" fill="#d9232b" />
            <path d="M1 11.500L6.500 2 12 11.500M3.500 11l3-5 3 5M1 10h11" fill="none" stroke="#fff" />
          </svg>
          <span className="flex-1 whitespace-nowrap font-['Inter','Noto_Sans_CJK_SC',sans-serif] text-[10px] leading-4">EPLAN Electric P8 2.7 - D:\Users\Public\EPLAN\Data\表格\P R C\我的设备列表.f03 - [/我的设备列表.f03]</span>
          <WindowControls />
        </header>
        <nav className="flex h-[27px] shrink-0 items-center gap-[11px] bg-linear-to-b from-[#fafbfe] to-[#d6ddef] pl-[9px] text-[10px]">
          <FormIcon className="-mr-1.5 h-[13px] w-[11px]" />
          {menus.map((text) => (
            <button key={text} type="button" className="whitespace-nowrap">
              <MenuLabel text={text} />
            </button>
          ))}
          <DocumentControls />
        </nav>
        <div className="flex shrink-0 flex-col gap-px border-y border-[#b3bbcf] bg-[#d5dbed]">
          <div className="flex">
            <Toolbar label="标准" width="w-[440px] pl-[2px] pr-[8px]" items="new page,open project,close project,print,|,settings,|,cut,copy,paste,|,delete area,|,copy format,assign format,|,undo list,undo,redo,redo list,|,workspace,page macro,check page,data table,preview" />
            <Toolbar label="视图" width="w-[490px] pl-[6px] pr-[4px]" items="refresh,zoom window,zoom in,zoom out,zoom all,|,back,forward,|,grid A,grid B,grid C,grid D,grid E,|,grid,grid snap,align to grid,object snap,design mode,smart connect,numbering,coordinate input,|,signal path,signal arc,signal net" />
            <Toolbar label="部件" width="w-[101px] pl-[5px] pr-[6px]" items="place block,move nodes,|,cart,text frame" />
          </div>
          <div className="flex">
            <Toolbar label="项目" width="w-[302px] pl-[2px] pr-[2px]" items="parts list,parts cart,|,add-ons,|,number all,number devices,number pins,|,synchronize,|,confirm mark,configure mark,next mark,|,mark report,go to mark,|,remove mark" />
            <Toolbar label="页" width="w-[135px] pl-[8px] pr-[6px]" items="copy page,new document,link document,open document,previous document,next document" />
            <Toolbar label="设备" width="w-[398px] pl-[6px] pr-[6px]" items="insert device,|,terminal strip,|,insert symbols,insert symbol,insert pin,|,plug strip,plug in,plug out,plug swap,plug turn,box top,box middle,wire list,|,contact row,contact end,|,align blocks,hatch,empty frame" />
            <Toolbar label="连接" width="w-[198px] pl-[5px] pr-[6px]" items="mounting rail,|,bus,bus shield,bus break,|,node left,node center,|,node right,|,wire merge" />
          </div>
          <div className="flex gap-[19px] pl-[14px]">
            <Toolbar label="报表" width="w-[288px] pl-[4px] pr-[10px]" items="#导出,|,#生成,#更新,frame,#设置,#命名,#删除,report table,|,#编辑,|,#分配,report orange,report node,report" />
            <Toolbar label="宏" width="w-[72px] pl-[2px] pr-[6px]" items="#设置,#命名,#删除" />
          </div>
        </div>
        <div className="flex min-h-0 flex-1">
          <div className="flex w-[179px] shrink-0 flex-col">
            <PagesPanel />
            <PreviewPanel />
          </div>
          <div className="ml-1 w-[29px] shrink-0 border-l-2 border-[#75809c] pr-0.5 pt-2">
            <SideToolbar label="图形" height="h-[455px]" items="line,polyline,polygon,rectangle,rectangle by centre,|,circle,circle by points,arc by centre,arc by points,sector,ellipse,|,spline,|,text,image,hyperlink,|,linear dimension,aligned dimension,continued dimension,chain dimension,baseline dimension,angular dimension,radius dimension" />
          </div>
          <Workspace />
          <div className="w-[25px] shrink-0 pt-2">
            <SideToolbar label="连接符号" height="h-[254px]" items="corner down right,corner down left,corner up right,corner up left,|,t-node down,t-node up,t-node right,t-node left,|,jumper,crossing,|,interruption,diagonal" />
          </div>
        </div>
        <footer className="flex h-4 shrink-0 items-center border-t border-white bg-linear-to-b from-[#f4f6fc] to-[#d8dff0] pl-0.5 pt-1 text-[10px]">
          <span className="w-[74px]">X: 66.64 mm</span>
          <span className="flex-1">Y: 226.82 mm</span>
          <span className="w-[129px]">打开: 4.00 mm</span>
          <span className="w-[126px]">图形 1:1</span>
          <svg className="mr-[18px] h-[13px] w-[14px]" viewBox="0 0 14 14" aria-hidden="true">
            <path d="M7 0v10M2 5l5 5 5-5M1 12h12" fill="none" stroke="#2a9270" strokeWidth="2.500" />
          </svg>
        </footer>
      </div>
      <Watermark />
    </div>
  );
}
